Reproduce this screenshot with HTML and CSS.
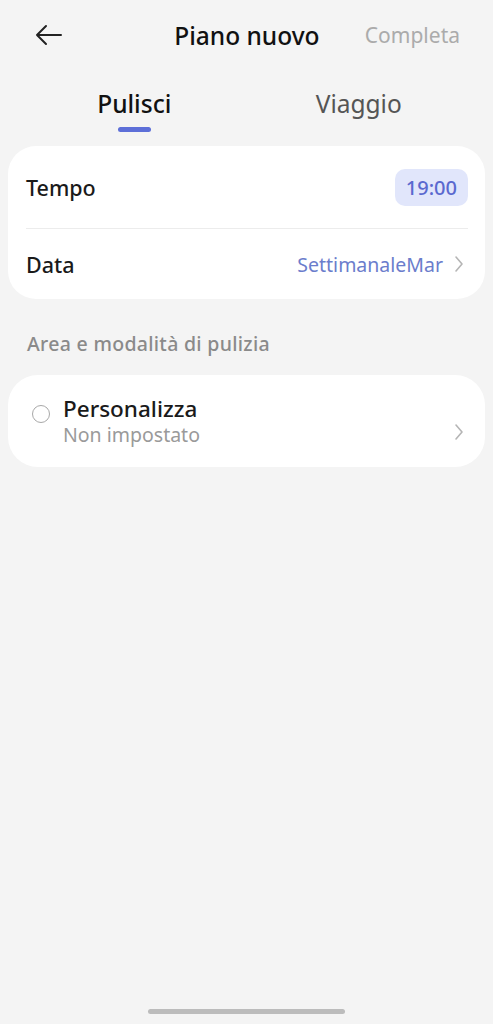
FILE: index.html
```html
<!DOCTYPE html>
<html lang="it">
<head>
  <meta charset="UTF-8">
  <title>Piano nuovo</title>
  <link rel="stylesheet" href="styles.css">
</head>
<body>
  <div class="screen">
    <header class="topbar">
      <button class="back" aria-label="Indietro">
        <svg width="28" height="22" viewBox="0 0 28 22"><path d="M12 2 L3 11 L12 20 M3 11 H27" fill="none" stroke="#222" stroke-width="2" stroke-linecap="round" stroke-linejoin="round"/></svg>
      </button>
      <h1 class="title">Piano nuovo</h1>
      <span class="done">Completa</span>
    </header>

    <nav class="tabs">
      <div class="tab active">Pulisci<span class="indicator"></span></div>
      <div class="tab">Viaggio</div>
    </nav>

    <section class="card">
      <div class="row">
        <span class="label">Tempo</span>
        <span class="pill">19:00</span>
      </div>
      <div class="divider"></div>
      <div class="row">
        <span class="label">Data</span>
        <span class="value">SettimanaleMar
          <svg class="chevron" width="10" height="18" viewBox="0 0 10 18"><path d="M2 2 L8 9 L2 16" fill="none" stroke="#b5b5b5" stroke-width="1.6" stroke-linecap="round" stroke-linejoin="round"/></svg>
        </span>
      </div>
    </section>

    <h2 class="section-label">Area e modalità di pulizia</h2>

    <section class="card option">
      <span class="radio"></span>
      <div class="option-text">
        <div class="option-title">Personalizza</div>
        <div class="option-sub">Non impostato</div>
      </div>
      <svg class="chevron down" width="10" height="18" viewBox="0 0 10 18"><path d="M2 2 L8 9 L2 16" fill="none" stroke="#b5b5b5" stroke-width="1.6" stroke-linecap="round" stroke-linejoin="round"/></svg>
    </section>

    <div class="spacer"></div>
    <div class="home-bar"></div>
  </div>
</body>
</html>
```

FILE: styles.css
```css
html, body {
  margin: 0;
  padding: 0;
}

body {
  font-family: "Noto Sans", "Open Sans", sans-serif;
  background-color: #f4f4f4;
  color: #1a1a1a;
}

.screen {
  width: 493px;
  height: 1024px;
  display: flex;
  flex-direction: column;
}

.topbar {
  height: 70px;
  display: flex;
  align-items: center;
  padding: 0 33px 0 34px;
}

.back {
  background: none;
  border: none;
  padding: 0;
  width: 30px;
  display: flex;
  align-items: center;
}

.title {
  flex: 1;
  margin: 0;
  text-align: center;
  font-size: 24.5px;
  font-weight: 500;
  padding-left: 65px;
  color: #111;
}

.done {
  font-size: 21px;
  color: #ababab;
}

.tabs {
  display: flex;
  height: 76px;
  padding: 0 22px;
}

.tab {
  flex: 1;
  display: flex;
  flex-direction: column;
  align-items: center;
  padding-top: 17px;
  font-size: 24.5px;
  color: #555;
}

.tab.active {
  color: #111;
  font-weight: 500;
}

.indicator {
  display: block;
  width: 33px;
  height: 5px;
  border-radius: 3px;
  background: #5d6fd8;
  margin-top: 7px;
}

.card {
  margin: 0 8px;
  background: #fff;
  border-radius: 28px;
  padding: 0 17px 0 18px;
}

.row {
  display: flex;
  align-items: center;
  justify-content: space-between;
}

.row:first-child {
  height: 82px;
}

.row:last-child {
  height: 70px;
}

.label {
  font-size: 21.5px;
  font-weight: 500;
  color: #1a1a1a;
}

.pill {
  background: #e1e6fb;
  color: #5a69cf;
  font-size: 20px;
  font-weight: 500;
  padding: 5px 11px;
  border-radius: 10px;
}

.divider {
  height: 1px;
  background: #ececec;
}

.value {
  display: flex;
  align-items: center;
  gap: 11px;
  font-size: 19.5px;
  color: #6b7dcc;
  padding-right: 4px;
}

.section-label {
  margin: 31px 0 0 27px;
  font-size: 19.5px;
  letter-spacing: 0.3px;
  font-weight: 500;
  color: #8a8a8a;
  height: 45px;
}

.option {
  display: flex;
  align-items: center;
  height: 92px;
  padding: 0 21px 0 24px;
  border-radius: 30px;
}

.radio {
  width: 16px;
  height: 16px;
  border: 1.6px solid #a8a8a8;
  border-radius: 50%;
  margin-right: 13px;
  margin-top: -14px;
}

.option-text {
  flex: 1;
  line-height: 26px;
  margin-top: 2px;
}

.option-title {
  font-size: 22.5px;
  font-weight: 500;
  color: #1a1a1a;
}

.option-sub {
  font-size: 19.5px;
  color: #9a9a9a;
}

.chevron.down {
  margin-top: 22px;
}

.spacer {
  flex: 1;
}

.home-bar {
  width: 197px;
  height: 5px;
  border-radius: 3px;
  background: #bcbcbc;
  margin: 0 auto 10px;
}
```
